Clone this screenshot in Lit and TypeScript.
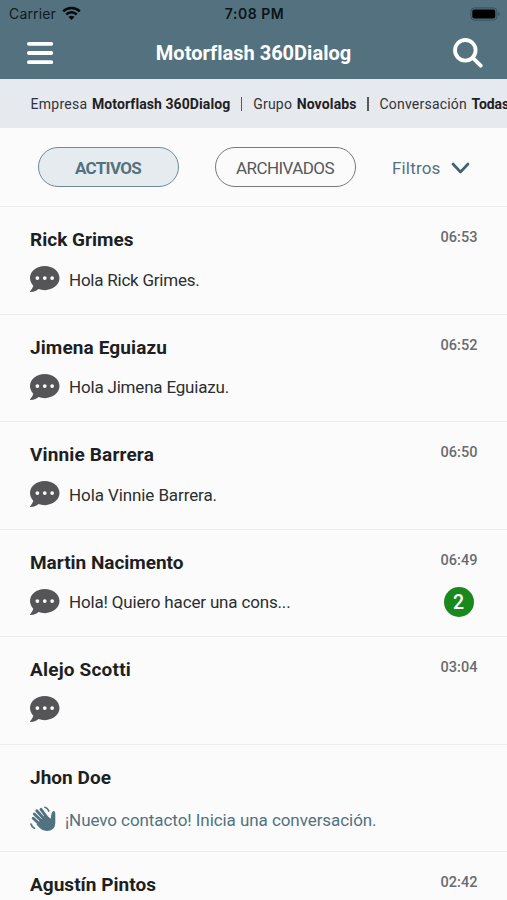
import { LitElement, html, css, nothing } from "lit";
import { customElement, property } from "lit/decorators.js";

interface Chat {
  name: string;
  nameWidth: number;
  time?: string;
  message?: string;
  messageWidth?: number;
  unread?: number;
  isNew?: boolean;
}

const CHATS: Chat[] = [
  { name: "Rick Grimes", nameWidth: 103.5, time: "06:53", message: "Hola Rick Grimes.", messageWidth: 130.5 },
  { name: "Jimena Eguiazu", nameWidth: 137, time: "06:52", message: "Hola Jimena Eguiazu.", messageWidth: 160 },
  { name: "Vinnie Barrera", nameWidth: 124, time: "06:50", message: "Hola Vinnie Barrera.", messageWidth: 148 },
  { name: "Martin Nacimento", nameWidth: 153.5, time: "06:49", message: "Hola! Quiero hacer una cons...", messageWidth: 221.5, unread: 2 },
  { name: "Alejo Scotti", nameWidth: 101, time: "03:04" },
  { name: "Jhon Doe", nameWidth: 81, message: "¡Nuevo contacto! Inicia una conversación.", messageWidth: 311.5, isNew: true },
  { name: "Agustín Pintos", nameWidth: 126, time: "02:42" },
];

/** A single line of text whose tracking is adjusted to fill a given width. */
@customElement("fit-text")
export class FitText extends LitElement {
  static styles = css`
    :host { display: inline-block; white-space: pre; flex: none; }
    .run { display: inline-block; }
  `;
  @property() text = "";
  @property({ type: Number }) width = 0;

  updated() {
    const run = this.renderRoot.querySelector<HTMLElement>(".run")!;
    run.style.letterSpacing = "0px";
    const natural = run.getBoundingClientRect().width;
    run.style.letterSpacing = `${(this.width - natural) / this.text.length}px`;
  }

  render() {
    return html`<span class="run">${this.text}</span>`;
  }
}

const fit = (text: string, width: number, cls = "") =>
  html`<fit-text class=${cls} .text=${text} .width=${width}></fit-text>`;

@customElement("chat-row")
export class ChatRow extends LitElement {
  static styles = css`
    :host {
      display: flex; flex-direction: column; box-sizing: border-box; flex: none;
      height: 107.5px; padding: 18px 29.5px 0 30px; border-bottom: 1px solid #ececee;
    }
    .top { display: flex; justify-content: space-between; height: 30px; }
    .name { font-size: 19px; font-weight: 700; line-height: 30px; color: #1d1f22; }
    .time { font-size: 14.5px; font-weight: 500; line-height: 25px; color: #696c6e; }
    .bottom { display: flex; align-items: center; height: 30px; margin-top: 9.5px; }
    .bubble { width: 29.5px; height: 26px; margin-right: 9.5px; margin-top: -.5px; flex: none; }
    .wave { width: 26px; height: 26px; margin-right: 9px; margin-top: -1px; flex: none; }
    .message { font-size: 17px; line-height: 30px; color: #2c2e30; }
    .new .message { color: #517280; }
    .new { margin-top: 12px; }
    .badge {
      width: 30px; height: 30px; margin-left: auto; margin-right: 4px; border-radius: 50%;
      background: #1a881d; color: #fff; font-size: 19.500px; font-weight: 500; line-height: 31px; text-align: center;
    }
  `;
  @property({ attribute: false }) chat!: Chat;

  private bubble() {
    return html`<svg class="bubble" viewBox="0 32 512 448" preserveAspectRatio="none">
      <path fill="#555557" d="M256 32C114.600 32 0 125.100 0 240c0 49.600 21.400 95 57 130.700C44.500 421.100 2.700 466 2.200 466.500c-2.200 2.300-2.800 5.700-1.500 8.700S4.800 480 8 480c66.300 0 116-31.800 140.600-51.400 32.700 12.300 69 19.400 107.400 19.400 141.400 0 256-93.100 256-208S397.400 32 256 32z"/>
      <g fill="#fbfbfc"><circle cx="128" cy="240" r="33"/><circle cx="256" cy="240" r="33"/><circle cx="384" cy="240" r="33"/></g>
    </svg>`;
  }

  private wave() {
    return html`<svg class="wave" viewBox="0 0 26 26">
      <g fill="none" stroke="#517280" stroke-linecap="round">
        <path stroke-width="2.900" d="M12.500 16 4.300 8M15 14 6.800 4.700M17 11.500 11 3.400M11 19.500 3.200 12.300"/>
        <path stroke-width="1.700" d="M15 1.300q2.600 .8 3.700 3.600M1 18q.7 2.900 3.400 4.200"/>
      </g>
      <path fill="#517280" d="M15.500 8.500 20.700 12.800 21.500 7.500Q22.200 5 23.700 5Q25.500 5.200 25.300 8V17Q25 25 16.500 25Q12.500 25 9.500 21.800L6.500 18.500Z"/>
    </svg>`;
  }

  render() {
    const c = this.chat;
    return html`
      <div class="top">
        ${fit(c.name, c.nameWidth, "name")}
        ${c.time ? fit(c.time, 37, "time") : nothing}
      </div>
      <div class="bottom ${c.isNew ? "new" : ""}">
        ${c.isNew ? this.wave() : this.bubble()}
        ${c.message ? fit(c.message, c.messageWidth!, "message") : nothing}
        ${c.unread ? html`<span class="badge">${c.unread}</span>` : nothing}
      </div>`;
  }
}

@customElement("app-root")
export class AppRoot extends LitElement {
  static styles = css`
    :host {
      display: flex; flex-direction: column; width: 507px; height: 900px; overflow: hidden;
      background: #fbfbfc; font-family: Roboto, "Liberation Sans", sans-serif;
    }
    header { flex: none; height: 79px; background: #53717f; }
    .status {
      display: grid; grid-template-columns: 1fr auto 1fr; align-items: center;
      height: 27px; padding: 0 7px 0 9px; font-family: Inter, sans-serif; font-size: 14px; color: #10191e;
    }
    .carrier { display: flex; align-items: center; gap: 6px; }
    .wifi { width: 19px; height: 14px; margin-top: -2px; }
    .clock { font-weight: 600; color: #0c1418; }
    .battery { width: 30px; height: 14px; justify-self: end; }
    .nav { display: flex; align-items: center; justify-content: space-between; height: 51px; padding: 0 24px 0 26px; }
    .menu { width: 28px; height: 24px; }
    .search { width: 30px; height: 30px; }
    .title { font-size: 20px; font-weight: 700; color: #fff; }
    .context {
      display: flex; align-items: center; flex: none; box-sizing: border-box; height: 48.5px; padding: 1px 0 0 30.5px;
      background: #e6e9ed; font-size: 14px; color: #303438; overflow: hidden;
    }
    .strong { font-weight: 700; color: #1d2024; margin-left: 4.500px; }
    .bar { width: 1.5px; height: 14px; background: #54575b; margin: 0 10.700px; flex: none; }
    .filters {
      display: flex; align-items: center; flex: none; box-sizing: border-box;
      height: 79.500px; padding: 0 0 0 37.500px; border-bottom: 1px solid #ececee; font-size: 17px;
    }
    .pill {
      display: flex; align-items: center; justify-content: center; box-sizing: border-box;
      width: 141px; height: 39.500px; margin-right: 36px; border-radius: 20px; border: 1.5px solid #77797b;
      color: #56585a; line-height: 22px; padding-top: 2px;
    }
    .active { background: #e6ebef; border-color: #6d8b98; color: #53717f; font-weight: 700; }
    .filter { color: #53717f; padding-top: 2px; margin-left: .5px; }
    .chevron { width: 19px; height: 12px; margin-left: 10px; margin-top: 2px; }
  `;

  render() {
    return html`
      <header>
        <div class="status">
          <div class="carrier">${fit("Carrier", 47)}
            <svg class="wifi" viewBox="0 0 19 14">
              <g fill="none" stroke="#05090b" stroke-width="2.500">
                <path d="M1.200 5.300a11.800 11.800 0 0 1 16.600 0"/><path d="M4.300 8.500a7.300 7.300 0 0 1 10.400 0"/>
              </g>
              <path fill="#05090b" d="M9.500 14 6.500 10.900a4.200 4.200 0 0 1 6 0z"/>
            </svg>
          </div>
          ${fit("7:08 PM", 59.5, "clock")}
          <svg class="battery" viewBox="0 0 30 14">
            <rect x=".9" y=".9" width="26" height="12.200" rx="3.500" fill="none" stroke="#38505b" stroke-width="1"/>
            <rect x="2.300" y="2.400" width="23" height="9.200" rx="2" fill="#000"/>
            <path d="M28.200 5v4q1.500-.6 1.500-2t-1.500-2z" fill="#38505b"/>
          </svg>
        </div>
        <div class="nav">
          <svg class="menu" viewBox="0 0 28 24"><path stroke="#fff" stroke-width="3.800" stroke-linecap="round" d="M2.900 2.800h22.400M2.900 12h22.400M2.900 21.200h22.400"/></svg>
          ${fit("Motorflash 360Dialog", 195, "title")}
          <svg class="search" viewBox="0 0 30 30"><g fill="none" stroke="#fff" stroke-width="3.800" stroke-linecap="round"><circle cx="12.300" cy="12.300" r="10.300"/><path d="M19.800 19.800 27.700 27.700"/></g></svg>
        </div>
      </header>
      <div class="context">
        ${fit("Empresa", 57)}${fit("Motorflash 360Dialog", 138, "strong")}
        <span class="bar"></span>
        ${fit("Grupo", 39)}${fit("Novolabs", 60, "strong")}
        <span class="bar"></span>
        ${fit("Conversación", 87.5)}${fit("Todas", 37.5, "strong")}
      </div>
      <div class="filters">
        <div class="pill active">${fit("ACTIVOS", 66)}</div>
        <div class="pill">${fit("ARCHIVADOS", 98)}</div>
        ${fit("Filtros", 48.5, "filter")}
        <svg class="chevron" viewBox="0 0 19 12"><path fill="none" stroke="#3f6273" stroke-width="2.600" stroke-linecap="round" stroke-linejoin="round" d="M2 2 9.500 10 17 2"/></svg>
      </div>
      ${CHATS.map((chat) => html`<chat-row .chat=${chat}></chat-row>`)}
    `;
  }
}
